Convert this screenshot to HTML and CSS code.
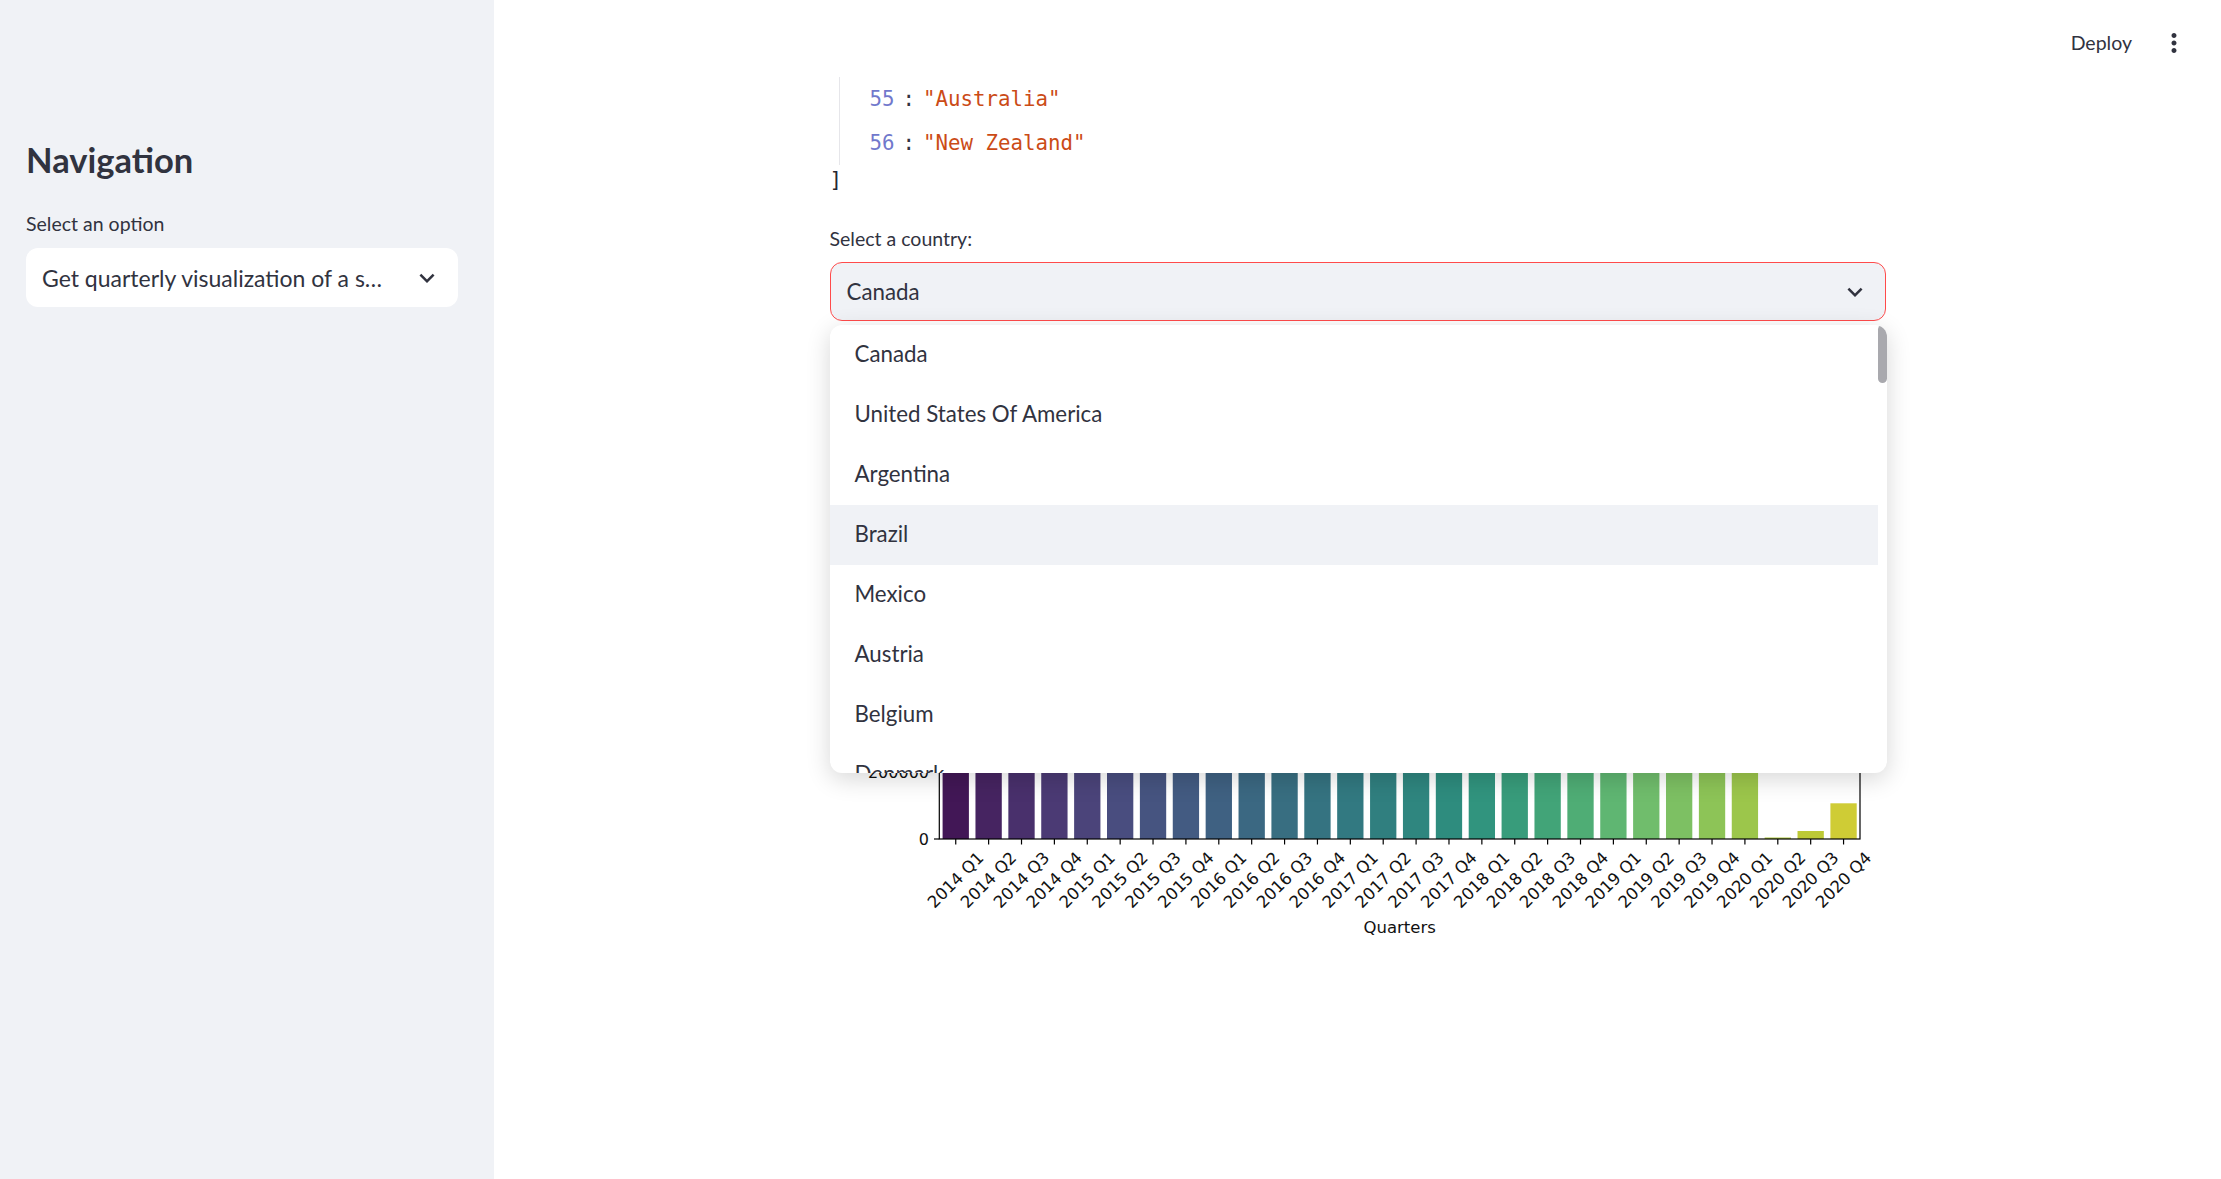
FILE: index.html
```html
<!DOCTYPE html>
<html lang="en">
<head>
<meta charset="utf-8">
<title>Quarterly visualization</title>
<link rel="stylesheet" href="styles.css">
</head>
<body>
<div class="app">
  <aside class="sidebar">
    <h1 class="sidebar-title">Navigation</h1>
    <div class="field-label side-label">Select an option</div>
    <div class="select side-select">
      <span class="select-value">Get quarterly visualization of a s…</span>
      <svg class="chev" viewBox="0 0 24 24"><path d="M16.59 8.59L12 13.17 7.41 8.59 6 10l6 6 6-6z"/></svg>
    </div>
  </aside>
  <main class="main">
    <header class="header">
      <span class="deploy">Deploy</span>
      <svg class="kebab" viewBox="0 0 24 24"><path d="M12 8c1.1 0 2-.9 2-2s-.9-2-2-2-2 .9-2 2 .9 2 2 2zm0 2c-1.1 0-2 .9-2 2s.9 2 2 2 2-.9 2-2-.9-2-2-2zm0 6c-1.1 0-2 .9-2 2s.9 2 2 2 2-.9 2-2-.9-2-2-2z"/></svg>
    </header>
    <div class="content">
      <div class="json-children">
        <div class="json-row"><span class="json-idx">55</span><span class="json-colon">:</span><span class="json-str">"Australia"</span></div>
        <div class="json-row"><span class="json-idx">56</span><span class="json-colon">:</span><span class="json-str">"New Zealand"</span></div>
      </div>
      <div class="json-close">]</div>

      <div class="country-field">
        <div class="field-label">Select a country:</div>
        <div class="select-wrap">
          <div class="select main-select">
            <span class="select-value">Canada</span>
            <svg class="chev" viewBox="0 0 24 24"><path d="M16.59 8.59L12 13.17 7.41 8.59 6 10l6 6 6-6z"/></svg>
          </div>
          <div class="dropdown">
            <div class="option">Canada</div>
            <div class="option">United States Of America</div>
            <div class="option">Argentina</div>
            <div class="option active">Brazil</div>
            <div class="option">Mexico</div>
            <div class="option">Austria</div>
            <div class="option">Belgium</div>
            <div class="option">Denmark</div>
            <div class="option">Finland</div>
            <div class="thumb"></div>
          </div>
        </div>
      </div>

      <svg class="chart" width="1056" height="620" viewBox="0 0 1056 620">
        <g class="bars">
          <rect x="112.59" y="120" width="26.31" height="374" fill="#421756"/>
          <rect x="145.47" y="110" width="26.31" height="384" fill="#462461"/>
          <rect x="178.35" y="130" width="26.31" height="364" fill="#49306c"/>
          <rect x="211.24" y="100" width="26.31" height="394" fill="#4b3a74"/>
          <rect x="244.12" y="115" width="26.31" height="379" fill="#4b447a"/>
          <rect x="277.00" y="105" width="26.31" height="389" fill="#494d7f"/>
          <rect x="309.88" y="125" width="26.31" height="369" fill="#465480"/>
          <rect x="342.76" y="95" width="26.31" height="399" fill="#435b82"/>
          <rect x="375.65" y="110" width="26.31" height="384" fill="#3f6182"/>
          <rect x="408.53" y="100" width="26.31" height="394" fill="#3b6882"/>
          <rect x="441.41" y="120" width="26.31" height="374" fill="#386e81"/>
          <rect x="474.29" y="90" width="26.31" height="404" fill="#357381"/>
          <rect x="507.17" y="105" width="26.31" height="389" fill="#327981"/>
          <rect x="540.06" y="95" width="26.31" height="399" fill="#307f7f"/>
          <rect x="572.94" y="115" width="26.31" height="379" fill="#2f867f"/>
          <rect x="605.82" y="85" width="26.31" height="409" fill="#2e8c7e"/>
          <rect x="638.70" y="100" width="26.31" height="394" fill="#31947e"/>
          <rect x="671.58" y="90" width="26.31" height="404" fill="#389c7b"/>
          <rect x="704.47" y="110" width="26.31" height="384" fill="#42a478"/>
          <rect x="737.35" y="80" width="26.31" height="414" fill="#4fad75"/>
          <rect x="770.23" y="95" width="26.31" height="399" fill="#5fb672"/>
          <rect x="803.11" y="85" width="26.31" height="409" fill="#70bd6c"/>
          <rect x="835.99" y="105" width="26.31" height="389" fill="#7dc063"/>
          <rect x="868.88" y="75" width="26.31" height="419" fill="#8dc457"/>
          <rect x="901.76" y="90" width="26.31" height="404" fill="#9cc64b"/>
          <rect x="934.64" y="492.5" width="26.31" height="1.5" fill="#adc740"/>
          <rect x="967.52" y="486" width="26.31" height="8" fill="#bdc936"/>
          <rect x="1000.40" y="458.3" width="26.31" height="35.7" fill="#cfcc35"/>
        </g>
        <g class="spines" stroke="#000" stroke-width="1.2" fill="none">
          <rect x="109.3" y="20" width="920.7" height="474"/>
        </g>
        <g class="ticks" stroke="#000" stroke-width="1.2">
          <line x1="104" y1="494" x2="109.3" y2="494"/>
          <line x1="104" y1="427" x2="109.3" y2="427"/>
          <line x1="104" y1="360" x2="109.3" y2="360"/>
          <line x1="104" y1="293" x2="109.3" y2="293"/>
          <line x1="104" y1="226" x2="109.3" y2="226"/>
          <line x1="104" y1="159" x2="109.3" y2="159"/>
          <line x1="104" y1="92" x2="109.3" y2="92"/>
          <line x1="104" y1="25" x2="109.3" y2="25"/>
          <line x1="125.74" y1="494" x2="125.74" y2="499.5"/>
          <line x1="158.63" y1="494" x2="158.63" y2="499.5"/>
          <line x1="191.51" y1="494" x2="191.51" y2="499.5"/>
          <line x1="224.39" y1="494" x2="224.39" y2="499.5"/>
          <line x1="257.27" y1="494" x2="257.27" y2="499.5"/>
          <line x1="290.16" y1="494" x2="290.16" y2="499.5"/>
          <line x1="323.04" y1="494" x2="323.04" y2="499.5"/>
          <line x1="355.92" y1="494" x2="355.92" y2="499.5"/>
          <line x1="388.80" y1="494" x2="388.80" y2="499.5"/>
          <line x1="421.68" y1="494" x2="421.68" y2="499.5"/>
          <line x1="454.57" y1="494" x2="454.57" y2="499.5"/>
          <line x1="487.45" y1="494" x2="487.45" y2="499.5"/>
          <line x1="520.33" y1="494" x2="520.33" y2="499.5"/>
          <line x1="553.21" y1="494" x2="553.21" y2="499.5"/>
          <line x1="586.09" y1="494" x2="586.09" y2="499.5"/>
          <line x1="618.98" y1="494" x2="618.98" y2="499.5"/>
          <line x1="651.86" y1="494" x2="651.86" y2="499.5"/>
          <line x1="684.74" y1="494" x2="684.74" y2="499.5"/>
          <line x1="717.62" y1="494" x2="717.62" y2="499.5"/>
          <line x1="750.50" y1="494" x2="750.50" y2="499.5"/>
          <line x1="783.39" y1="494" x2="783.39" y2="499.5"/>
          <line x1="816.27" y1="494" x2="816.27" y2="499.5"/>
          <line x1="849.15" y1="494" x2="849.15" y2="499.5"/>
          <line x1="882.03" y1="494" x2="882.03" y2="499.5"/>
          <line x1="914.91" y1="494" x2="914.91" y2="499.5"/>
          <line x1="947.80" y1="494" x2="947.80" y2="499.5"/>
          <line x1="980.68" y1="494" x2="980.68" y2="499.5"/>
          <line x1="1013.56" y1="494" x2="1013.56" y2="499.5"/>
        </g>
        <g class="ylabels">
          <text x="99" y="494">0</text>
          <text x="99" y="427">200000</text>
          <text x="99" y="360">400000</text>
          <text x="99" y="293">600000</text>
          <text x="99" y="226">800000</text>
          <text x="99" y="159">1000000</text>
          <text x="99" y="92">1200000</text>
          <text x="99" y="25">1400000</text>
        </g>
        <g class="xlabels">
          <text x="125.74" y="535" transform="rotate(-45 125.74 535)">2014 Q1</text>
          <text x="158.63" y="535" transform="rotate(-45 158.63 535)">2014 Q2</text>
          <text x="191.51" y="535" transform="rotate(-45 191.51 535)">2014 Q3</text>
          <text x="224.39" y="535" transform="rotate(-45 224.39 535)">2014 Q4</text>
          <text x="257.27" y="535" transform="rotate(-45 257.27 535)">2015 Q1</text>
          <text x="290.16" y="535" transform="rotate(-45 290.16 535)">2015 Q2</text>
          <text x="323.04" y="535" transform="rotate(-45 323.04 535)">2015 Q3</text>
          <text x="355.92" y="535" transform="rotate(-45 355.92 535)">2015 Q4</text>
          <text x="388.80" y="535" transform="rotate(-45 388.80 535)">2016 Q1</text>
          <text x="421.68" y="535" transform="rotate(-45 421.68 535)">2016 Q2</text>
          <text x="454.57" y="535" transform="rotate(-45 454.57 535)">2016 Q3</text>
          <text x="487.45" y="535" transform="rotate(-45 487.45 535)">2016 Q4</text>
          <text x="520.33" y="535" transform="rotate(-45 520.33 535)">2017 Q1</text>
          <text x="553.21" y="535" transform="rotate(-45 553.21 535)">2017 Q2</text>
          <text x="586.09" y="535" transform="rotate(-45 586.09 535)">2017 Q3</text>
          <text x="618.98" y="535" transform="rotate(-45 618.98 535)">2017 Q4</text>
          <text x="651.86" y="535" transform="rotate(-45 651.86 535)">2018 Q1</text>
          <text x="684.74" y="535" transform="rotate(-45 684.74 535)">2018 Q2</text>
          <text x="717.62" y="535" transform="rotate(-45 717.62 535)">2018 Q3</text>
          <text x="750.50" y="535" transform="rotate(-45 750.50 535)">2018 Q4</text>
          <text x="783.39" y="535" transform="rotate(-45 783.39 535)">2019 Q1</text>
          <text x="816.27" y="535" transform="rotate(-45 816.27 535)">2019 Q2</text>
          <text x="849.15" y="535" transform="rotate(-45 849.15 535)">2019 Q3</text>
          <text x="882.03" y="535" transform="rotate(-45 882.03 535)">2019 Q4</text>
          <text x="914.91" y="535" transform="rotate(-45 914.91 535)">2020 Q1</text>
          <text x="947.80" y="535" transform="rotate(-45 947.80 535)">2020 Q2</text>
          <text x="980.68" y="535" transform="rotate(-45 980.68 535)">2020 Q3</text>
          <text x="1013.56" y="535" transform="rotate(-45 1013.56 535)">2020 Q4</text>
        </g>
        <text class="xtitle" x="569.65" y="588">Quarters</text>
      </svg>
    </div>
  </main>
</div>
</body>
</html>
```

FILE: styles.css
```css
* { box-sizing: border-box; }

body {
  margin: 0;
  font-family: Lato, "Noto Sans", sans-serif;
  color: #31333f;
  background: #ffffff;
}

.app {
  display: flex;
  height: 1179px;
  overflow: hidden;
}

/* Sidebar */
.sidebar {
  width: 494px;
  flex: none;
  background: #f0f2f6;
  padding: 138px 36px 0 26px;
}

.sidebar-title {
  margin: 0;
  height: 44px;
  line-height: 44px;
  font-size: 34.5px;
  font-weight: 700;
  color: #31333f;
}

.field-label {
  height: 24px;
  line-height: 24px;
  font-size: 19.5px;
  color: #31333f;
}

.side-label { margin-top: 30px; }

.select {
  height: 59px;
  border-radius: 12px;
  display: flex;
  align-items: center;
}

.side-select {
  margin-top: 12px;
  background: #ffffff;
  padding: 0 16px;
}

.select-value {
  flex: 1;
  min-width: 0;
  font-size: 22.3px;
  white-space: nowrap;
  overflow: hidden;
  text-overflow: ellipsis;
  color: #31333f;
}

.side-select .select-value {
  font-size: 23px;
}

.chev {
  width: 30px;
  height: 30px;
  flex: none;
  fill: #31333f;
}

/* Main */
.main {
  flex: 1;
  position: relative;
}

.header {
  position: absolute;
  top: 0;
  right: 0;
  height: 85px;
  display: flex;
  align-items: center;
  padding-right: 32px;
}

.deploy {
  font-size: 19.5px;
  margin-right: 27px;
  color: #31333f;
}

.kebab {
  width: 30px;
  height: 30px;
  fill: #31333f;
}

.content {
  width: 1056px;
  margin: 0 auto;
  padding-top: 77px;
}

.json-children {
  margin-left: 9px;
  border-left: 1px solid #e6e6ea;
  padding-left: 30px;
}

.json-row {
  height: 44px;
  line-height: 44px;
  font-family: "DejaVu Sans Mono", "Liberation Mono", monospace;
  font-size: 20.75px;
  white-space: pre;
}

.json-idx { color: #7178cc; }
.json-colon { margin: 0 8px; color: #31333f; }
.json-str { color: #cb4b16; }

.json-close {
  height: 30px;
  line-height: 30px;
  font-family: "DejaVu Sans Mono", "Liberation Mono", monospace;
  font-size: 20.75px;
  color: #262730;
}

.country-field { margin-top: 32px; }

.select-wrap {
  position: relative;
  margin-top: 11px;
}

.main-select {
  background: #f0f2f6;
  border: 1px solid #ff4b4b;
  padding: 0 15px 0 16px;
}

.dropdown {
  position: absolute;
  left: 0;
  right: -1px;
  top: 63px;
  height: 448px;
  background: #ffffff;
  border-radius: 12px;
  box-shadow: 0 6px 24px rgba(0, 0, 0, 0.16);
  overflow: hidden;
  z-index: 2;
}

.option {
  height: 60px;
  display: flex;
  align-items: center;
  padding-left: 25px;
  padding-bottom: 3px;
  margin-right: 9px;
  font-size: 22.3px;
  color: #31333f;
}

.option.active { background: #f0f2f6; }

.thumb {
  position: absolute;
  right: 0;
  top: 0;
  width: 9px;
  height: 58px;
  border-radius: 5px;
  background: #a9a9ae;
}

/* Chart */
.chart {
  display: block;
  margin-top: 24px;
}

.ylabels text {
  font-family: "DejaVu Sans", sans-serif;
  font-size: 16px;
  fill: #111;
  text-anchor: end;
  dominant-baseline: central;
}

.xlabels text {
  font-family: "DejaVu Sans", sans-serif;
  font-size: 16.5px;
  fill: #111;
  text-anchor: middle;
  dominant-baseline: central;
}

.xtitle {
  font-family: "DejaVu Sans", sans-serif;
  font-size: 16.5px;
  fill: #111;
  text-anchor: middle;
}
```
